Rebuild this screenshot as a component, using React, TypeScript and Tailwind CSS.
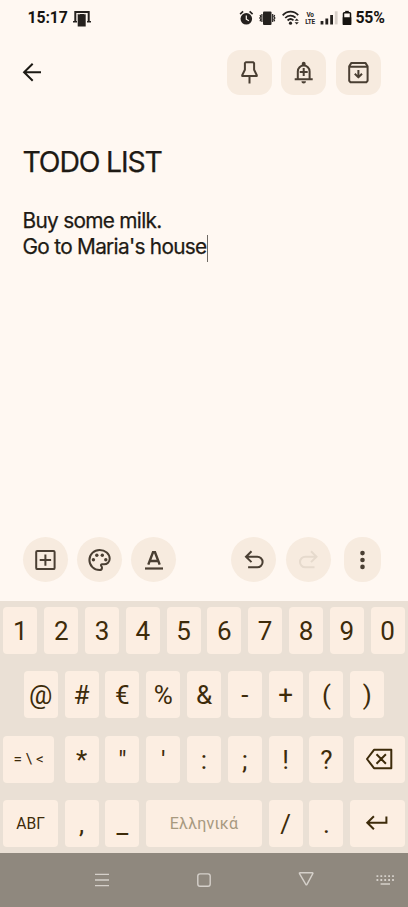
import type { ReactNode } from "react";

const INK = "#4a3f33";

function Glyph({ w = 45, h = 45, color = INK, sw = 2, children }: { w?: number; h?: number; color?: string; sw?: number; children: ReactNode }) {
  return (
    <svg width={w} height={h} viewBox={`0 0 ${w} ${h}`} fill="none" stroke={color} strokeWidth={sw} className="block shrink-0">
      {children}
    </svg>
  );
}

function StatusBar() {
  return (
    <div className="flex h-9 items-center pl-[27.5px] pr-[21.5px] text-[#171411]">
      <span className="w-[40px] whitespace-nowrap text-[15.8px] font-bold leading-none tracking-[-0.1px]">15:17</span>
      <div className="ml-[5px]">
        <Glyph w={18} h={18} color="#25211e" sw={1.5}>
          <path d="M2.3 12V3h13.4v9" strokeWidth={2} />
          <path d="M0 12.7h4M14 12.7h4" />
          <rect x="4.7" y="5" width="8" height="12.5" fill="#25211e" stroke="none" />
          <path d="M5 4.8h2M11 4.8h2" stroke="#eee5dc" strokeWidth={1} />
        </Glyph>
      </div>
      <div className="ml-auto flex items-center">
        <Glyph w={16} h={18} color="#25211e">
          <circle cx="7.3" cy="9.8" r="5.8" fill="#25211e" stroke="none" />
          <path d="M1.1 5.2l3-2.8M13.6 5.2l-3-2.8" strokeWidth={1.6} />
          <path d="M7.3 6.6v3.6l2.6 1.6" stroke="#fff8f2" strokeWidth={1.2} />
        </Glyph>
        <div className="ml-[4px]">
          <Glyph w={17} h={18} color="#25211e" sw={1.2}>
            <rect x="4" y="2.5" width="8.5" height="13.5" rx="1" fill="#25211e" stroke="none" />
            <path d="M2.9 5v8M13.7 5v8" />
            <path d="M1 6l.8 1.5L.8 9l1 1.5L1 12.3M15.7 6l-.8 1.5 1 1.5-1 1.5.8 1.8" />
          </Glyph>
        </div>
        <div className="ml-[6.5px]">
          <Glyph w={19} h={18} color="#25211e" sw={1.8}>
            <path d="M.7 6.4C5.1 1.5 12 1.5 16.2 6.2M3.2 9c3-3.2 7.3-3.2 10.3-.4M5.6 11.5c1.9-1.9 4-1.9 5.9-.2" />
            <circle cx="8.5" cy="14.2" r="1.6" fill="#25211e" stroke="none" />
            <path d="M12.6 11.7l2.1-2.3 2.1 2.3zM12.6 13.2l2.1 2.3 2.1-2.3z" fill="#25211e" stroke="none" />
          </Glyph>
        </div>
        <div className="ml-[2.5px] flex w-[12px] scale-x-[0.8] flex-col items-center text-[8px] font-bold leading-[7px] tracking-[-0.3px] text-[#25211e]">
          <span>Vo</span>
          <span>LTE</span>
        </div>
        <div className="ml-[4px]">
          <Glyph w={18} h={18} color="#25211e" sw={2.8}>
            <path d="M2 12v3.4M6.8 9.6v5.8M11.6 6v9.4" />
            <path d="M16.2 2.3v13.1" stroke="#d8d0c9" />
          </Glyph>
        </div>
        <div className="ml-[4px]">
          <Glyph w={10} h={18} color="#171411" sw={1.5}>
            <rect x="1.5" y="3.8" width="7" height="11.4" rx=".8" />
            <path d="M3.2 2.6h3.6" />
            <path d="M1.5 9h7v6.2h-7z" fill="#171411" />
          </Glyph>
        </div>
        <span className="ml-[4px] w-[31px] whitespace-nowrap text-[15.8px] font-bold leading-none tracking-[-0.2px]">55%</span>
      </div>
    </div>
  );
}

function TopButton({ children }: { children: ReactNode }) {
  return <button className="block h-[45px] w-[45px] rounded-[13px] bg-[#f7ebdf]">{children}</button>;
}

function RoundButton({ children }: { children: ReactNode }) {
  return <button className="block h-[45px] w-[45px] rounded-full bg-[#f7ebdf]">{children}</button>;
}

function Header() {
  return (
    <header className="flex h-[59px] items-end pl-[22px] pr-[27.4px]">
      <div className="mb-[12px]">
        <Glyph w={20} h={22} color="#1d1a15">
          <path d="M19 11.3H2M10.7 2.8L2.1 11.3l8.6 8.5" />
        </Glyph>
      </div>
      <div className="ml-auto flex gap-[9.4px]">
        <TopButton>
          <Glyph>
            <path d="M18.7 12.3h7.5l.9.9v6.5l2.7 5.6v.8H15.2v-.8l2.7-5.6v-6.5zM22.5 26v7.4" strokeLinejoin="round" />
          </Glyph>
        </TopButton>
        <TopButton>
          <Glyph>
            <path d="M13.7 29.2h18M16.8 29v-7.6a5.9 5.9 0 0 1 11.8 0V29M22.7 18v8M18.7 22h8" />
            <path d="M20.8 15.8v-2.2a1.9 1.9 0 0 1 3.8 0v2.2zM20.4 31.2h4.6a2.3 2.3 0 0 1-4.6 0z" fill={INK} stroke="none" />
          </Glyph>
        </TopButton>
        <TopButton>
          <Glyph>
            <path d="M13.2 16.2l2.2-3.3h14l2.2 3.3v14.6l-1.3 1.4H14.5l-1.3-1.4zM13.2 16.8h18.4M22.4 20v7.2M18.8 23.8l3.6 3.6 3.6-3.6" strokeLinejoin="round" />
          </Glyph>
        </TopButton>
      </div>
    </header>
  );
}

function Toolbar() {
  return (
    <div className="flex h-[45px] shrink-0 items-center pl-[23px] pr-[27.2px]">
      <div className="flex gap-[9.2px]">
        <RoundButton>
          <Glyph>
            <rect x="13.2" y="13.9" width="18.4" height="18.2" rx="1.2" />
            <path d="M22.4 17.4v11.4M16.7 23.1h11.4" />
          </Glyph>
        </RoundButton>
        <RoundButton>
          <Glyph>
            <path d="M22.6 12.9c-5.6 0-10.2 4.5-10.2 10.1s4.6 10.1 10.2 10.1c1.4 0 2.4-1 2.4-2.4 0-.7-.3-1.2-.7-1.6-.3-.4-.5-.7-.3-1.2.2-.4.6-.6 1.1-.6h2c3.1 0 5.6-2.4 5.6-5.5 0-5-4.5-8.9-10.1-8.9z" />
            <g fill={INK} stroke="none">
              <circle cx="16.4" cy="22.8" r="1.7" />
              <circle cx="19.8" cy="18.2" r="1.7" />
              <circle cx="25.3" cy="18.2" r="1.7" />
              <circle cx="28.8" cy="22.8" r="1.7" />
            </g>
          </Glyph>
        </RoundButton>
        <RoundButton>
          <Glyph>
            <path d="M17.3 27.6L22 15.2h2l4.7 12.4M19.2 24h7.6" strokeWidth={2.4} />
            <path d="M14 31.5h18" strokeWidth={2.2} />
          </Glyph>
        </RoundButton>
      </div>
      <div className="ml-auto flex">
        <RoundButton>
          <Glyph>
            <path d="M20.5 14.3L15 19.7l5.5 5.4M15 19.7h11.3a5.3 5.3 0 0 1 0 10.6h-9.2" />
          </Glyph>
        </RoundButton>
        <div className="ml-[9.5px]">
          <RoundButton>
            <Glyph color="#e6dacd">
              <path d="M25 14.3l5.5 5.4-5.5 5.4M30.5 19.7H19.3a5.3 5.3 0 0 0 0 10.6h9.2" />
            </Glyph>
          </RoundButton>
        </div>
        <button className="ml-[13.5px] h-[45px] w-[36.5px] rounded-[18px] bg-[#f7ebdf]">
          <Glyph w={36}>
            <g fill={INK} stroke="none">
              <circle cx="18.5" cy="16.1" r="2.3" />
              <circle cx="18.5" cy="23" r="2.3" />
              <circle cx="18.5" cy="29.9" r="2.3" />
            </g>
          </Glyph>
        </button>
      </div>
    </div>
  );
}

function Key({ children, className = "w-[34px] text-[26px]" }: { children: ReactNode; className?: string }) {
  return (
    <button className={`flex h-[47px] shrink-0 items-center justify-center whitespace-pre rounded-[4px] bg-[#fceee2] pt-[1.5px] leading-none text-[#3d2b0a] ${className}`}>
      {children}
    </button>
  );
}

function Keyboard() {
  return (
    <div className="flex h-[251.5px] shrink-0 flex-col gap-[17.5px] bg-[#eae0d5] px-[3.4px] pt-[5.6px]">
      <div className="flex justify-between">
        {"1234567890".split("").map((k) => (
          <Key key={k}>{k}</Key>
        ))}
      </div>
      <div className="flex justify-between px-[20.4px]">
        {"@#€%&-+()".split("").map((k) => (
          <Key key={k}>{k}</Key>
        ))}
      </div>
      <div className="flex justify-between">
        <Key className="w-[50.6px] text-[15.4px]">{"= \\ <"}</Key>
        <div className="flex gap-[6.8px]">
          {"*\"':;!?".split("").map((k) => (
            <Key key={k}>{k}</Key>
          ))}
        </div>
        <Key className="w-[50.6px]">
          <Glyph w={30} h={24}>
            <path d="M10 1.8h17.3v18.4H10L3 11zM12.5 6.3l9.4 9.4M21.9 6.3l-9.4 9.4" stroke="#3d2b0a" strokeWidth={2} strokeLinejoin="round" />
          </Glyph>
        </Key>
      </div>
      <div className="flex justify-between">
        <Key className="w-[54.4px] text-[15.6px]">ΑΒΓ</Key>
        <Key>,</Key>
        <Key>_</Key>
        <Key className="w-[115.6px] text-[16px] tracking-[0.2px] text-[#a7997f]">Ελληνικά</Key>
        <Key>/</Key>
        <Key>.</Key>
        <Key className="w-[54.4px]">
          <Glyph w={24} h={20} color="#3d2b0a">
            <path d="M21.4 2.4v6.4H2.1M8.9 2.3L2.3 8.8l6.6 6.5" />
          </Glyph>
        </Key>
      </div>
    </div>
  );
}

function NavBar() {
  return (
    <nav className="flex h-[54.5px] shrink-0 items-center bg-[#8f887e]">
      <div className="ml-[94px]">
        <Glyph w={16} h={16} color="#d5d0ca" sw={1.3}>
          <path d="M1 2.4h14M1 8h14M1 13.6h14" />
        </Glyph>
      </div>
      <div className="ml-[86px]">
        <Glyph w={16} h={16} color="#d5d0ca" sw={1.4}>
          <rect x="1.8" y="1.9" width="12.4" height="12.4" rx="2.2" />
        </Glyph>
      </div>
      <div className="ml-[85.5px]">
        <Glyph w={17} h={18} color="#d5d0ca" sw={1.4}>
          <path d="M2.1 1.7h12.2q1 0 .5 1L9 13.4q-.6 1-1.2 0L1.5 2.7q-.4-1 .6-1z" />
        </Glyph>
      </div>
      <div className="ml-[60.5px]">
        <Glyph w={20} h={16} color="#d5d0ca" sw={1.8}>
          <path d="M1.5 4.2h18M1.5 8h18" strokeDasharray="1.8 2.1" />
          <path d="M5.6 12h9.4" strokeWidth={1.5} />
        </Glyph>
      </div>
    </nav>
  );
}

export default function App() {
  return (
    <div className="flex h-[907px] w-[408px] flex-col overflow-hidden bg-[#fff8f2] font-['Roboto',sans-serif]">
      <StatusBar />
      <Header />
      <main className="flex-1 pl-[22.5px] pt-[49.5px] font-['Inter',sans-serif] text-[#1e1a14] [-webkit-text-stroke:0.25px_#1e1a14]">
        <h1 className="whitespace-nowrap text-[28.4px] font-normal leading-[34px] tracking-[-1.15px]">TODO LIST</h1>
        <div className="mt-[29.5px] whitespace-nowrap text-[20.8px] font-normal leading-[25.6px] tracking-[-0.7px]">
          <p>Buy some milk.</p>
          <p className="flex">
            Go to Maria's house
            <span className="mt-[1px] h-[27px] w-px bg-[#6f6a64]" />
          </p>
        </div>
      </main>
      <Toolbar />
      <div className="h-[18.7px] shrink-0" />
      <Keyboard />
      <NavBar />
    </div>
  );
}
